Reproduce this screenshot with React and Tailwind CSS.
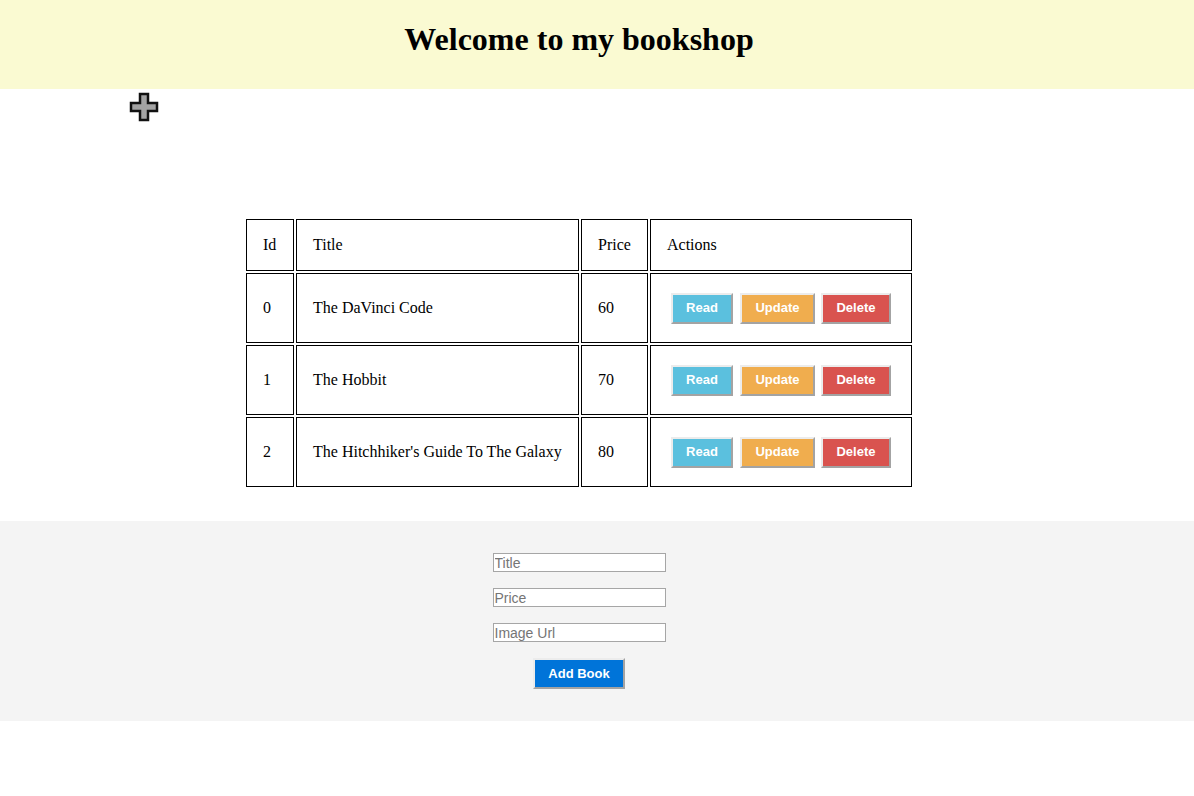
import React from 'react';

const books = [
  { id: 0, title: 'The DaVinci Code', price: 60 },
  { id: 1, title: 'The Hobbit', price: 70 },
  { id: 2, title: "The Hitchhiker's Guide To The Galaxy", price: 80 },
];

const btnBase =
  "h-[31px] border-2 border-t-[#ececec] border-l-[#ececec] border-r-[#a3a3a3] border-b-[#a3a3a3] text-white text-[13px] font-bold font-['Liberation_Sans',Arial,sans-serif] text-center";

const inputBase =
  "w-[173px] h-[19px] border border-[#a6a6a6] bg-white px-[1px] text-[14px] leading-[17px] placeholder:text-[#757575] outline-none";

const PlusIcon = () => (
  <svg width="30" height="30" viewBox="0 0 30 30">
    <path
      d="M11 2h8v9h9v8h-9v9h-8v-9H2v-8h9z"
      fill="#a3a3a3"
      stroke="#111"
      strokeWidth="2.5"
      strokeLinejoin="miter"
    />
  </svg>
);

const Cell = ({ children, className = '' }) => (
  <td className={`border border-black px-4 align-middle ${className}`}>{children}</td>
);

const App = () => {
  return (
    <div className="min-h-[796px] bg-white font-['Liberation_Serif','Times_New_Roman',serif] text-black">
      <header className="h-[89px] bg-[#fafad2]">
        <div className="w-[1158px] text-center pt-[21px]">
          <h1 className="text-[32px] font-bold leading-[37px]">Welcome to my bookshop</h1>
        </div>
      </header>

      <div className="pl-[129px] pt-[3px]">
        <PlusIcon />
      </div>

      <div className="w-[1158px] pt-[95px]">
        <table className="mx-auto border-separate border-spacing-[2px] text-[16px] text-left">
          <thead>
            <tr className="h-[52px]">
              <Cell className="w-[48px] font-normal">Id</Cell>
              <Cell className="w-[283px]">Title</Cell>
              <Cell className="w-[67px]">Price</Cell>
              <Cell className="w-[262px]">Actions</Cell>
            </tr>
          </thead>
          <tbody>
            {books.map((book) => (
              <tr key={book.id} className="h-[70px]">
                <Cell>{book.id}</Cell>
                <Cell>{book.title}</Cell>
                <Cell>{book.price}</Cell>
                <Cell>
                  <div className="flex items-center pl-[4px]">
                    <button className={`${btnBase} w-[62px] bg-[#5bc0de]`}>Read</button>
                    <button className={`${btnBase} w-[75px] ml-[7px] bg-[#f0ad4e]`}>Update</button>
                    <button className={`${btnBase} w-[70px] ml-[6px] bg-[#d9534f]`}>Delete</button>
                  </div>
                </Cell>
              </tr>
            ))}
          </tbody>
        </table>
      </div>

      <div className="mt-[32px] h-[200px] bg-[#f4f4f4]">
        <div className="w-[1158px] flex flex-col items-center pt-[32px] font-['Liberation_Sans',Arial,sans-serif]">
          <input placeholder="Title" className={inputBase} />
          <input placeholder="Price" className={`${inputBase} mt-[16px]`} />
          <input placeholder="Image Url" className={`${inputBase} mt-[16px]`} />
          <button className={`${btnBase} mt-[16px] w-[92px] bg-[#0074d9]`}>Add Book</button>
        </div>
      </div>
    </div>
  );
};

export default App;
